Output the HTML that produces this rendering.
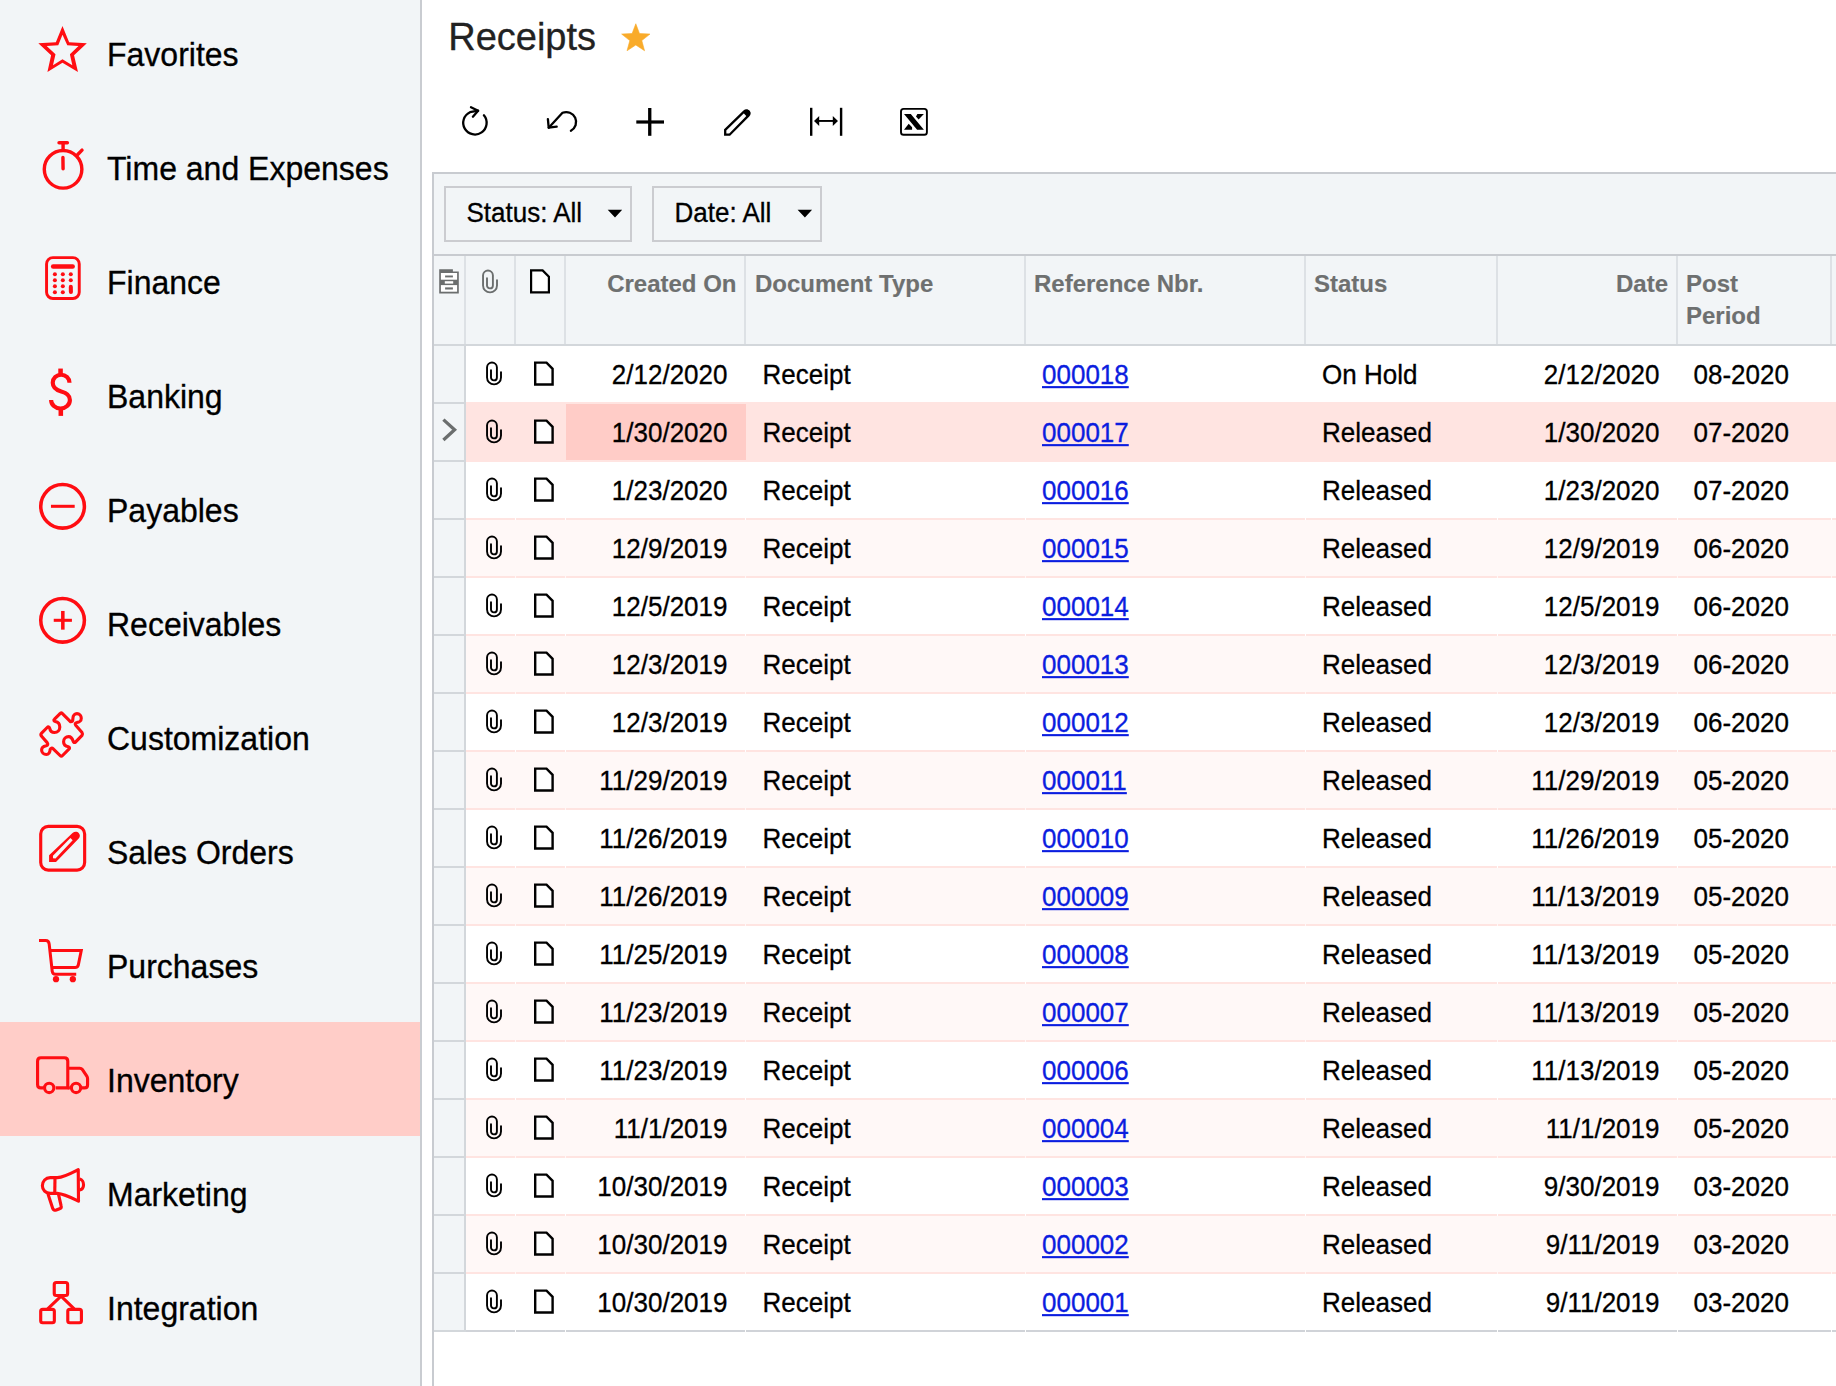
<!DOCTYPE html>
<html><head><meta charset="utf-8"><title>Receipts</title>
<style>
html,body{margin:0;padding:0;}
body{width:1836px;height:1386px;overflow:hidden;position:relative;background:#fff;font-family:"Liberation Sans",sans-serif;}
.t{position:absolute;white-space:nowrap;-webkit-text-stroke:0.3px currentColor;transform:scaleY(1.05);}
.r{position:absolute;}
svg{position:absolute;overflow:visible;}
a{color:#0b1ddf;text-decoration:underline;text-decoration-thickness:2px;text-underline-offset:2px;}
</style></head><body>

<div class="r" style="left:0px;top:0px;width:420px;height:1386px;background:#f2f5f7;"></div>
<div class="r" style="left:420px;top:0px;width:2px;height:1386px;background:#c9ccd1;"></div>
<div class="r" style="left:0px;top:1022px;width:420px;height:114px;background:#ffcdc8;"></div>
<div class="t" style="left:107px;top:39.21px;font-size:32px;line-height:32px;color:#000;font-weight:normal;transform-origin:0 27.09px;">Favorites</div>
<div class="t" style="left:107px;top:153.21px;font-size:32px;line-height:32px;color:#000;font-weight:normal;transform-origin:0 27.09px;">Time and Expenses</div>
<div class="t" style="left:107px;top:267.21px;font-size:32px;line-height:32px;color:#000;font-weight:normal;transform-origin:0 27.09px;">Finance</div>
<div class="t" style="left:107px;top:381.21px;font-size:32px;line-height:32px;color:#000;font-weight:normal;transform-origin:0 27.09px;">Banking</div>
<div class="t" style="left:107px;top:495.21px;font-size:32px;line-height:32px;color:#000;font-weight:normal;transform-origin:0 27.09px;">Payables</div>
<div class="t" style="left:107px;top:609.21px;font-size:32px;line-height:32px;color:#000;font-weight:normal;transform-origin:0 27.09px;">Receivables</div>
<div class="t" style="left:107px;top:723.21px;font-size:32px;line-height:32px;color:#000;font-weight:normal;transform-origin:0 27.09px;">Customization</div>
<div class="t" style="left:107px;top:837.21px;font-size:32px;line-height:32px;color:#000;font-weight:normal;transform-origin:0 27.09px;">Sales Orders</div>
<div class="t" style="left:107px;top:951.21px;font-size:32px;line-height:32px;color:#000;font-weight:normal;transform-origin:0 27.09px;">Purchases</div>
<div class="t" style="left:107px;top:1065.21px;font-size:32px;line-height:32px;color:#000;font-weight:normal;transform-origin:0 27.09px;">Inventory</div>
<div class="t" style="left:107px;top:1179.21px;font-size:32px;line-height:32px;color:#000;font-weight:normal;transform-origin:0 27.09px;">Marketing</div>
<div class="t" style="left:107px;top:1293.21px;font-size:32px;line-height:32px;color:#000;font-weight:normal;transform-origin:0 27.09px;">Integration</div>
<svg style="left:30px;top:20px" width="70" height="70" viewBox="0 0 1386 1386"><path fill="#ff0d12" fill-rule="evenodd" d="M643 120 L775 440 L1125 462 L872 700 L950 1030 L643 848 L345 1030 L418 700 L165 462 L512 440 Z M643 290 L560 498 L330 515 L505 680 L455 895 L643 775 L838 895 L790 680 L960 515 L738 498 Z"/></svg>
<svg style="left:30px;top:135px" width="70" height="70" viewBox="0 0 1386 1386"><g fill="none" stroke="#ff0d12" stroke-width="68" stroke-linecap="round"><circle cx="655" cy="680" r="372"/><line x1="575" y1="152" x2="740" y2="152"/><line x1="655" y1="152" x2="655" y2="300" stroke-linecap="butt"/><line x1="652" y1="445" x2="655" y2="670"/><line x1="945" y1="385" x2="1030" y2="300"/></g></svg>
<svg style="left:30px;top:248px" width="70" height="70" viewBox="0 0 1386 1386"><g><rect x="328" y="190" width="647" height="810" rx="125" fill="none" stroke="#ff0d12" stroke-width="58"/><line x1="458" y1="365" x2="845" y2="365" stroke="#ff0d12" stroke-width="88" stroke-linecap="round"/><circle cx="493" cy="520" r="40" fill="#ff0d12"/><circle cx="493" cy="638" r="40" fill="#ff0d12"/><circle cx="493" cy="757" r="40" fill="#ff0d12"/><circle cx="493" cy="875" r="40" fill="#ff0d12"/><circle cx="650" cy="520" r="40" fill="#ff0d12"/><circle cx="650" cy="638" r="40" fill="#ff0d12"/><circle cx="650" cy="757" r="40" fill="#ff0d12"/><circle cx="650" cy="875" r="40" fill="#ff0d12"/><circle cx="808" cy="520" r="40" fill="#ff0d12"/><circle cx="808" cy="638" r="40" fill="#ff0d12"/><line x1="808" y1="770" x2="810" y2="870" stroke="#ff0d12" stroke-width="80" stroke-linecap="round"/></g></svg>
<svg style="left:30px;top:362px" width="70" height="70" viewBox="0 0 1386 1386"><g><path fill="none" stroke="#ff0d12" stroke-width="82" d="M782 410 A166 158 0 0 0 450 410 C450 515 520 555 620 585 C730 615 790 670 790 750 A186 170 0 0 1 418 750"/><rect x="560" y="130" width="90" height="140" fill="#ff0d12"/><rect x="565" y="900" width="90" height="167" fill="#ff0d12"/></g></svg>
<svg style="left:30px;top:476px" width="70" height="70" viewBox="0 0 1386 1386"><g><circle cx="645" cy="600" r="432" fill="none" stroke="#ff0d12" stroke-width="70"/><rect x="415" y="570" width="470" height="60" fill="#ff0d12"/></g></svg>
<svg style="left:30px;top:590px" width="70" height="70" viewBox="0 0 1386 1386"><g><circle cx="645" cy="600" r="432" fill="none" stroke="#ff0d12" stroke-width="70"/><rect x="470" y="570" width="360" height="60" fill="#ff0d12"/><rect x="615" y="415" width="70" height="370" fill="#ff0d12"/></g></svg>
<svg style="left:30px;top:704px" width="70" height="70" viewBox="0 0 1386 1386"><path fill="none" stroke="#ff0d12" stroke-width="62" stroke-linejoin="round" stroke-linecap="round" d="M627 175 L805 352 C835 352 850 320 850 280 C850 220 890 190 930 190 C980 190 1015 235 1015 280 C1015 330 975 365 930 365 C890 370 890 400 905 420 L1030 565 C1040 580 1040 605 1030 620 L900 755 C880 770 860 760 855 740 C840 690 810 645 765 645 C710 645 665 690 665 745 C665 800 700 835 760 845 C780 850 790 870 775 890 L645 1020 C630 1035 610 1035 595 1020 L455 885 C435 865 410 875 400 900 C395 960 370 1000 325 1000 C270 1000 230 960 230 910 C230 860 270 835 320 825 C355 815 360 790 340 765 L230 640 C215 620 215 590 230 575 L340 465 C360 445 385 455 390 480 C400 540 440 565 485 565 C545 565 590 515 590 455 C590 400 555 355 500 345 C470 340 465 315 485 300 L595 190 C605 175 615 170 627 175 Z"/></svg>
<svg style="left:30px;top:818px" width="70" height="70" viewBox="0 0 1386 1386"><g><rect x="212" y="165" width="870" height="868" rx="150" fill="none" stroke="#ff0d12" stroke-width="62"/><path fill="#ff0d12" fill-rule="evenodd" d="M378 738 L842 298 C880 262 935 262 968 300 C1000 335 990 380 960 410 L515 870 L378 870 Z M455 745 L455 795 L505 800 L845 440 L800 398 Z"/></g></svg>
<svg style="left:30px;top:932px" width="70" height="70" viewBox="0 0 1386 1386"><g fill="none" stroke="#ff0d12" stroke-width="60"><path stroke-linejoin="round" d="M178 168 L310 168 C350 168 375 195 380 240 L440 780 C445 820 470 838 510 838 L915 838"/><path d="M405 368 L1015 368 L955 660 C945 690 925 705 895 705 L445 705"/><circle cx="515" cy="935" r="32" fill="#ff0d12" stroke="none"/><circle cx="515" cy="935" r="62" fill="#ff0d12" stroke="none"/><circle cx="848" cy="935" r="62" fill="#ff0d12" stroke="none"/></g></svg>
<svg style="left:30px;top:1046px" width="70" height="70" viewBox="0 0 1386 1386"><g fill="none" stroke="#ff0d12" stroke-width="62" stroke-linejoin="round"><path d="M265 830 L215 830 C175 830 150 800 150 760 L150 300 C150 260 175 232 215 232 L680 232 C720 232 748 260 748 300 L748 830 L510 830"/><path d="M748 440 L985 440 C1010 440 1025 450 1035 465 L1125 595 C1135 610 1140 625 1140 650 L1140 770 C1140 805 1115 830 1080 830 L1030 830"/><path d="M790 830 L748 830"/><circle cx="380" cy="830" r="92"/><circle cx="912" cy="830" r="92"/></g></svg>
<svg style="left:30px;top:1160px" width="70" height="70" viewBox="0 0 1386 1386"><g fill="none" stroke="#ff0d12" stroke-width="62" stroke-linejoin="round"><path d="M955 190 L960 815 C810 740 680 670 540 660 L400 660 C310 660 245 590 245 510 C245 420 310 350 400 350 L540 350 C680 340 800 270 955 190 Z"/><line x1="495" y1="350" x2="490" y2="660"/><path d="M985 375 C1030 385 1060 440 1060 490 C1060 545 1030 585 985 595"/><path d="M355 670 L450 960 C460 990 490 1000 520 990 L585 965 C615 955 625 935 615 905 L565 680"/></g></svg>
<svg style="left:30px;top:1274px" width="70" height="70" viewBox="0 0 1386 1386"><g fill="none" stroke="#ff0d12" stroke-width="62" stroke-linejoin="round"><rect x="480" y="168" width="265" height="258" rx="40"/><rect x="212" y="700" width="270" height="265" rx="40"/><rect x="748" y="700" width="270" height="265" rx="40"/><path d="M350 690 L615 440 L875 690" stroke-linejoin="miter"/></g></svg>
<div class="t" style="left:448.2px;top:17.83px;font-size:38px;line-height:38px;color:#222;font-weight:normal;transform-origin:0 32.17px;transform:none">Receipts</div>
<svg style="left:0;top:0" width="700" height="80"><path fill="#f9ab2a" stroke="#f9ab2a" stroke-width="0.6" stroke-linejoin="round" d="M635.80 23.77 L639.50 33.57 L649.97 34.07 L641.79 40.62 L644.56 50.72 L635.80 44.97 L627.04 50.72 L629.81 40.62 L621.63 34.07 L632.10 33.57 Z"/></svg>
<svg style="left:0;top:0" width="1836" height="200" viewBox="0 0 1836 200"><g fill="none" stroke="#000" stroke-width="2.3" stroke-linecap="round" stroke-linejoin="round"><path d="M483.9 115.3 A11.7 11.7 0 1 1 470 112.2 L478.1 110.7"/><path d="M471 107.2 L478.1 110.7 L472.9 116.7"/><path d="M570.9 130.7 A9.9 9.9 0 0 0 562.5 112.8 L548.7 127.7"/><path d="M547.9 119.2 L548.7 127.7 L556.7 126.7"/></g><rect x="636.3" y="120.4" width="27.7" height="3.2" fill="#000"/><rect x="648.1" y="108" width="3.3" height="27.8" fill="#000"/><path fill="none" stroke="#000" stroke-width="2.3" stroke-linejoin="miter" d="M725.2 129.8 L744.2 111.4 C745.6 110.2 747.3 110.3 748.5 111.5 C749.7 112.7 749.6 114.3 748.4 115.6 L729.6 134.7 L725.2 134.7 Z"/><path fill="#000" d="M743 112.5 L745.5 110.2 C747 109.2 748.7 109.6 749.6 110.8 C750.6 112 750.5 113.6 749.4 114.8 L747.2 117 Z"/><rect x="810" y="107.8" width="2.4" height="28" fill="#000"/><rect x="839.9" y="107.8" width="2.4" height="28" fill="#000"/><rect x="817" y="120" width="18" height="1.9" fill="#000"/><path fill="#000" d="M814 121 L819.2 116 L819.2 126 Z M838 121 L832.8 116 L832.8 126 Z"/><rect x="901" y="108.9" width="25.9" height="25.9" rx="2.6" fill="none" stroke="#000" stroke-width="1.9"/><path fill="#000" d="M904 114.1 L910.8 114.1 L923.9 129.7 L917.1 129.7 Z M917.4 114.1 L923.9 114.1 L918.6 119.5 L916 116.4 Z M904 129.7 L912.1 129.7 L912.1 127.3 L908.7 123.7 Z"/></svg>
<div class="r" style="left:432px;top:172px;width:1404px;height:2px;background:#c8cbd0;"></div>
<div class="r" style="left:432px;top:172px;width:2px;height:1214px;background:#c8cbd0;"></div>
<div class="r" style="left:434px;top:174px;width:1402px;height:80px;background:#f2f5f7;"></div>
<div class="r" style="left:434px;top:254px;width:1402px;height:2px;background:#c8cbd0;"></div>
<div class="r" style="left:444px;top:186px;width:184px;height:52px;border:2px solid #cbccd0;background:#f2f5f7"></div>
<div class="r" style="left:652px;top:186px;width:166px;height:52px;border:2px solid #cbccd0;background:#f2f5f7"></div>
<svg style="left:0;top:0" width="1836" height="260"><path fill="#000" d="M607.7 209.7 L622.2 209.7 L615 217.4 Z M797.6 209.7 L812.1 209.7 L804.9 217.4 Z"/></svg>
<div class="t" style="left:466.5px;top:199.99px;font-size:26px;line-height:26px;color:#000;font-weight:normal;transform-origin:0 22.01px;">Status: All</div>
<div class="t" style="left:674.5px;top:199.99px;font-size:26px;line-height:26px;color:#000;font-weight:normal;transform-origin:0 22.01px;">Date: All</div>
<div class="r" style="left:434px;top:256px;width:1402px;height:88px;background:#f2f5f7;"></div>
<div class="r" style="left:434px;top:344px;width:1402px;height:2px;background:#d3d7db;"></div>
<div class="r" style="left:464px;top:256px;width:2px;height:88px;background:#dde1e5;"></div>
<div class="r" style="left:514px;top:256px;width:2px;height:88px;background:#dde1e5;"></div>
<div class="r" style="left:564px;top:256px;width:2px;height:88px;background:#dde1e5;"></div>
<div class="r" style="left:744px;top:256px;width:2px;height:88px;background:#dde1e5;"></div>
<div class="r" style="left:1024px;top:256px;width:2px;height:88px;background:#dde1e5;"></div>
<div class="r" style="left:1304px;top:256px;width:2px;height:88px;background:#dde1e5;"></div>
<div class="r" style="left:1496px;top:256px;width:2px;height:88px;background:#dde1e5;"></div>
<div class="r" style="left:1676px;top:256px;width:2px;height:88px;background:#dde1e5;"></div>
<div class="r" style="left:1830px;top:256px;width:2px;height:88px;background:#dde1e5;"></div>
<div class="t" style="right:1099.5px;top:271.68px;font-size:24px;line-height:24px;color:#6e7070;font-weight:bold;transform-origin:0 20.32px;text-align:right;transform:none;-webkit-text-stroke:0.15px currentColor">Created On</div>
<div class="t" style="left:755px;top:271.68px;font-size:24px;line-height:24px;color:#6e7070;font-weight:bold;transform-origin:0 20.32px;transform:none;-webkit-text-stroke:0.15px currentColor">Document Type</div>
<div class="t" style="left:1034px;top:271.68px;font-size:24px;line-height:24px;color:#6e7070;font-weight:bold;transform-origin:0 20.32px;transform:none;-webkit-text-stroke:0.15px currentColor">Reference Nbr.</div>
<div class="t" style="left:1314px;top:271.68px;font-size:24px;line-height:24px;color:#6e7070;font-weight:bold;transform-origin:0 20.32px;transform:none;-webkit-text-stroke:0.15px currentColor">Status</div>
<div class="t" style="right:168px;top:271.68px;font-size:24px;line-height:24px;color:#6e7070;font-weight:bold;transform-origin:0 20.32px;text-align:right;transform:none;-webkit-text-stroke:0.15px currentColor">Date</div>
<div class="t" style="left:1686px;top:271.68px;font-size:24px;line-height:24px;color:#6e7070;font-weight:bold;transform-origin:0 20.32px;transform:none;-webkit-text-stroke:0.15px currentColor">Post</div>
<div class="t" style="left:1686px;top:303.68px;font-size:24px;line-height:24px;color:#6e7070;font-weight:bold;transform-origin:0 20.32px;transform:none;-webkit-text-stroke:0.15px currentColor">Period</div>
<svg style="left:0;top:0" width="1836" height="400"><path fill="#6b6e6e" d="M439.2 269.3 L452.9 269.3 L452.9 271.4 L458.8 271.4 L458.8 293.4 L439.2 293.4 Z"/><g fill="#fff"><rect x="440.9" y="273" width="16.2" height="6.7"/><rect x="440.9" y="285.1" width="16.2" height="6.6"/><rect x="444.8" y="281.2" width="8.4" height="2.4"/></g><g fill="#6b6e6e"><rect x="445.1" y="275.5" width="7.8" height="1.9"/><rect x="445.1" y="287.4" width="7.8" height="2.1"/></g><path fill="none" stroke="#6b6e6e" stroke-width="1.9" stroke-linecap="round" transform="translate(-4,-92)" d="M501 372.1 L501 377.4 A6.97 6.97 0 0 1 487.04 377.4 L487.04 367.2 A4.94 4.94 0 0 1 496.9 367.2 L496.9 377.4 A2.94 2.94 0 0 1 491 377.4 L491 370.2"/><path fill="#fff" stroke="#000" stroke-width="2.2" stroke-linejoin="miter" d="M531.1 270.4 L542.6 270.4 L548.9 276.8 L548.9 292.3 L531.1 292.3 Z"/></svg>
<div class="r" style="left:466px;top:346px;width:1370px;height:58px;background:#ffffff;"></div>
<div class="r" style="left:466px;top:402px;width:1370px;height:2px;background:#ffe4e1;"></div>
<div class="r" style="left:515px;top:402px;width:1px;height:2px;background:#ffe4e1;"></div>
<div class="r" style="left:565px;top:402px;width:1px;height:2px;background:#ffe4e1;"></div>
<div class="r" style="left:745px;top:402px;width:1px;height:2px;background:#ffe4e1;"></div>
<div class="r" style="left:1025px;top:402px;width:1px;height:2px;background:#ffe4e1;"></div>
<div class="r" style="left:1305px;top:402px;width:1px;height:2px;background:#ffe4e1;"></div>
<div class="r" style="left:1497px;top:402px;width:1px;height:2px;background:#ffe4e1;"></div>
<div class="r" style="left:1677px;top:402px;width:1px;height:2px;background:#ffe4e1;"></div>
<div class="r" style="left:1831px;top:402px;width:1px;height:2px;background:#ffe4e1;"></div>
<div class="r" style="left:434px;top:346px;width:30px;height:58px;background:#f2f5f7;"></div>
<div class="r" style="left:464px;top:346px;width:2px;height:58px;background:#d3d7db;"></div>
<div class="r" style="left:434px;top:402px;width:30px;height:2px;background:#d3d7db;"></div>
<div class="t" style="right:1108.5px;top:361.99px;font-size:26px;line-height:26px;color:#000;font-weight:normal;transform-origin:0 22.01px;text-align:right;">2/12/2020</div>
<div class="t" style="left:762.5px;top:361.99px;font-size:26px;line-height:26px;color:#000;font-weight:normal;transform-origin:0 22.01px;">Receipt</div>
<div class="t" style="left:1042px;top:361.99px;font-size:26px;line-height:26px;color:#000;font-weight:normal;transform-origin:0 22.01px;"><a>000018</a></div>
<div class="t" style="left:1322px;top:361.99px;font-size:26px;line-height:26px;color:#000;font-weight:normal;transform-origin:0 22.01px;">On Hold</div>
<div class="t" style="right:176.5px;top:361.99px;font-size:26px;line-height:26px;color:#000;font-weight:normal;transform-origin:0 22.01px;text-align:right;">2/12/2020</div>
<div class="t" style="left:1693.5px;top:361.99px;font-size:26px;line-height:26px;color:#000;font-weight:normal;transform-origin:0 22.01px;">08-2020</div>
<div class="r" style="left:466px;top:402px;width:1370px;height:60px;background:#ffe4e1;"></div>
<div class="r" style="left:466px;top:460px;width:1370px;height:2px;background:#ffe4e1;"></div>
<div class="r" style="left:434px;top:404px;width:30px;height:58px;background:#f2f5f7;"></div>
<div class="r" style="left:464px;top:404px;width:2px;height:58px;background:#d3d7db;"></div>
<div class="r" style="left:434px;top:460px;width:30px;height:2px;background:#d3d7db;"></div>
<div class="r" style="left:566px;top:404px;width:180px;height:56px;background:#ffccc7;"></div>
<div class="t" style="right:1108.5px;top:419.99px;font-size:26px;line-height:26px;color:#000;font-weight:normal;transform-origin:0 22.01px;text-align:right;">1/30/2020</div>
<div class="t" style="left:762.5px;top:419.99px;font-size:26px;line-height:26px;color:#000;font-weight:normal;transform-origin:0 22.01px;">Receipt</div>
<div class="t" style="left:1042px;top:419.99px;font-size:26px;line-height:26px;color:#000;font-weight:normal;transform-origin:0 22.01px;"><a>000017</a></div>
<div class="t" style="left:1322px;top:419.99px;font-size:26px;line-height:26px;color:#000;font-weight:normal;transform-origin:0 22.01px;">Released</div>
<div class="t" style="right:176.5px;top:419.99px;font-size:26px;line-height:26px;color:#000;font-weight:normal;transform-origin:0 22.01px;text-align:right;">1/30/2020</div>
<div class="t" style="left:1693.5px;top:419.99px;font-size:26px;line-height:26px;color:#000;font-weight:normal;transform-origin:0 22.01px;">07-2020</div>
<div class="r" style="left:466px;top:462px;width:1370px;height:58px;background:#ffffff;"></div>
<div class="r" style="left:466px;top:518px;width:1370px;height:2px;background:#ffe4e1;"></div>
<div class="r" style="left:515px;top:518px;width:1px;height:2px;background:#ffffff;"></div>
<div class="r" style="left:565px;top:518px;width:1px;height:2px;background:#ffffff;"></div>
<div class="r" style="left:745px;top:518px;width:1px;height:2px;background:#ffffff;"></div>
<div class="r" style="left:1025px;top:518px;width:1px;height:2px;background:#ffffff;"></div>
<div class="r" style="left:1305px;top:518px;width:1px;height:2px;background:#ffffff;"></div>
<div class="r" style="left:1497px;top:518px;width:1px;height:2px;background:#ffffff;"></div>
<div class="r" style="left:1677px;top:518px;width:1px;height:2px;background:#ffffff;"></div>
<div class="r" style="left:1831px;top:518px;width:1px;height:2px;background:#ffffff;"></div>
<div class="r" style="left:434px;top:462px;width:30px;height:58px;background:#f2f5f7;"></div>
<div class="r" style="left:464px;top:462px;width:2px;height:58px;background:#d3d7db;"></div>
<div class="r" style="left:434px;top:518px;width:30px;height:2px;background:#d3d7db;"></div>
<div class="t" style="right:1108.5px;top:477.99px;font-size:26px;line-height:26px;color:#000;font-weight:normal;transform-origin:0 22.01px;text-align:right;">1/23/2020</div>
<div class="t" style="left:762.5px;top:477.99px;font-size:26px;line-height:26px;color:#000;font-weight:normal;transform-origin:0 22.01px;">Receipt</div>
<div class="t" style="left:1042px;top:477.99px;font-size:26px;line-height:26px;color:#000;font-weight:normal;transform-origin:0 22.01px;"><a>000016</a></div>
<div class="t" style="left:1322px;top:477.99px;font-size:26px;line-height:26px;color:#000;font-weight:normal;transform-origin:0 22.01px;">Released</div>
<div class="t" style="right:176.5px;top:477.99px;font-size:26px;line-height:26px;color:#000;font-weight:normal;transform-origin:0 22.01px;text-align:right;">1/23/2020</div>
<div class="t" style="left:1693.5px;top:477.99px;font-size:26px;line-height:26px;color:#000;font-weight:normal;transform-origin:0 22.01px;">07-2020</div>
<div class="r" style="left:466px;top:520px;width:1370px;height:58px;background:#fff8f7;"></div>
<div class="r" style="left:466px;top:576px;width:1370px;height:2px;background:#ffe4e1;"></div>
<div class="r" style="left:515px;top:576px;width:1px;height:2px;background:#fff8f7;"></div>
<div class="r" style="left:565px;top:576px;width:1px;height:2px;background:#fff8f7;"></div>
<div class="r" style="left:745px;top:576px;width:1px;height:2px;background:#fff8f7;"></div>
<div class="r" style="left:1025px;top:576px;width:1px;height:2px;background:#fff8f7;"></div>
<div class="r" style="left:1305px;top:576px;width:1px;height:2px;background:#fff8f7;"></div>
<div class="r" style="left:1497px;top:576px;width:1px;height:2px;background:#fff8f7;"></div>
<div class="r" style="left:1677px;top:576px;width:1px;height:2px;background:#fff8f7;"></div>
<div class="r" style="left:1831px;top:576px;width:1px;height:2px;background:#fff8f7;"></div>
<div class="r" style="left:434px;top:520px;width:30px;height:58px;background:#f2f5f7;"></div>
<div class="r" style="left:464px;top:520px;width:2px;height:58px;background:#d3d7db;"></div>
<div class="r" style="left:434px;top:576px;width:30px;height:2px;background:#d3d7db;"></div>
<div class="t" style="right:1108.5px;top:535.99px;font-size:26px;line-height:26px;color:#000;font-weight:normal;transform-origin:0 22.01px;text-align:right;">12/9/2019</div>
<div class="t" style="left:762.5px;top:535.99px;font-size:26px;line-height:26px;color:#000;font-weight:normal;transform-origin:0 22.01px;">Receipt</div>
<div class="t" style="left:1042px;top:535.99px;font-size:26px;line-height:26px;color:#000;font-weight:normal;transform-origin:0 22.01px;"><a>000015</a></div>
<div class="t" style="left:1322px;top:535.99px;font-size:26px;line-height:26px;color:#000;font-weight:normal;transform-origin:0 22.01px;">Released</div>
<div class="t" style="right:176.5px;top:535.99px;font-size:26px;line-height:26px;color:#000;font-weight:normal;transform-origin:0 22.01px;text-align:right;">12/9/2019</div>
<div class="t" style="left:1693.5px;top:535.99px;font-size:26px;line-height:26px;color:#000;font-weight:normal;transform-origin:0 22.01px;">06-2020</div>
<div class="r" style="left:466px;top:578px;width:1370px;height:58px;background:#ffffff;"></div>
<div class="r" style="left:466px;top:634px;width:1370px;height:2px;background:#ffe4e1;"></div>
<div class="r" style="left:515px;top:634px;width:1px;height:2px;background:#ffffff;"></div>
<div class="r" style="left:565px;top:634px;width:1px;height:2px;background:#ffffff;"></div>
<div class="r" style="left:745px;top:634px;width:1px;height:2px;background:#ffffff;"></div>
<div class="r" style="left:1025px;top:634px;width:1px;height:2px;background:#ffffff;"></div>
<div class="r" style="left:1305px;top:634px;width:1px;height:2px;background:#ffffff;"></div>
<div class="r" style="left:1497px;top:634px;width:1px;height:2px;background:#ffffff;"></div>
<div class="r" style="left:1677px;top:634px;width:1px;height:2px;background:#ffffff;"></div>
<div class="r" style="left:1831px;top:634px;width:1px;height:2px;background:#ffffff;"></div>
<div class="r" style="left:434px;top:578px;width:30px;height:58px;background:#f2f5f7;"></div>
<div class="r" style="left:464px;top:578px;width:2px;height:58px;background:#d3d7db;"></div>
<div class="r" style="left:434px;top:634px;width:30px;height:2px;background:#d3d7db;"></div>
<div class="t" style="right:1108.5px;top:593.99px;font-size:26px;line-height:26px;color:#000;font-weight:normal;transform-origin:0 22.01px;text-align:right;">12/5/2019</div>
<div class="t" style="left:762.5px;top:593.99px;font-size:26px;line-height:26px;color:#000;font-weight:normal;transform-origin:0 22.01px;">Receipt</div>
<div class="t" style="left:1042px;top:593.99px;font-size:26px;line-height:26px;color:#000;font-weight:normal;transform-origin:0 22.01px;"><a>000014</a></div>
<div class="t" style="left:1322px;top:593.99px;font-size:26px;line-height:26px;color:#000;font-weight:normal;transform-origin:0 22.01px;">Released</div>
<div class="t" style="right:176.5px;top:593.99px;font-size:26px;line-height:26px;color:#000;font-weight:normal;transform-origin:0 22.01px;text-align:right;">12/5/2019</div>
<div class="t" style="left:1693.5px;top:593.99px;font-size:26px;line-height:26px;color:#000;font-weight:normal;transform-origin:0 22.01px;">06-2020</div>
<div class="r" style="left:466px;top:636px;width:1370px;height:58px;background:#fff8f7;"></div>
<div class="r" style="left:466px;top:692px;width:1370px;height:2px;background:#ffe4e1;"></div>
<div class="r" style="left:515px;top:692px;width:1px;height:2px;background:#fff8f7;"></div>
<div class="r" style="left:565px;top:692px;width:1px;height:2px;background:#fff8f7;"></div>
<div class="r" style="left:745px;top:692px;width:1px;height:2px;background:#fff8f7;"></div>
<div class="r" style="left:1025px;top:692px;width:1px;height:2px;background:#fff8f7;"></div>
<div class="r" style="left:1305px;top:692px;width:1px;height:2px;background:#fff8f7;"></div>
<div class="r" style="left:1497px;top:692px;width:1px;height:2px;background:#fff8f7;"></div>
<div class="r" style="left:1677px;top:692px;width:1px;height:2px;background:#fff8f7;"></div>
<div class="r" style="left:1831px;top:692px;width:1px;height:2px;background:#fff8f7;"></div>
<div class="r" style="left:434px;top:636px;width:30px;height:58px;background:#f2f5f7;"></div>
<div class="r" style="left:464px;top:636px;width:2px;height:58px;background:#d3d7db;"></div>
<div class="r" style="left:434px;top:692px;width:30px;height:2px;background:#d3d7db;"></div>
<div class="t" style="right:1108.5px;top:651.99px;font-size:26px;line-height:26px;color:#000;font-weight:normal;transform-origin:0 22.01px;text-align:right;">12/3/2019</div>
<div class="t" style="left:762.5px;top:651.99px;font-size:26px;line-height:26px;color:#000;font-weight:normal;transform-origin:0 22.01px;">Receipt</div>
<div class="t" style="left:1042px;top:651.99px;font-size:26px;line-height:26px;color:#000;font-weight:normal;transform-origin:0 22.01px;"><a>000013</a></div>
<div class="t" style="left:1322px;top:651.99px;font-size:26px;line-height:26px;color:#000;font-weight:normal;transform-origin:0 22.01px;">Released</div>
<div class="t" style="right:176.5px;top:651.99px;font-size:26px;line-height:26px;color:#000;font-weight:normal;transform-origin:0 22.01px;text-align:right;">12/3/2019</div>
<div class="t" style="left:1693.5px;top:651.99px;font-size:26px;line-height:26px;color:#000;font-weight:normal;transform-origin:0 22.01px;">06-2020</div>
<div class="r" style="left:466px;top:694px;width:1370px;height:58px;background:#ffffff;"></div>
<div class="r" style="left:466px;top:750px;width:1370px;height:2px;background:#ffe4e1;"></div>
<div class="r" style="left:515px;top:750px;width:1px;height:2px;background:#ffffff;"></div>
<div class="r" style="left:565px;top:750px;width:1px;height:2px;background:#ffffff;"></div>
<div class="r" style="left:745px;top:750px;width:1px;height:2px;background:#ffffff;"></div>
<div class="r" style="left:1025px;top:750px;width:1px;height:2px;background:#ffffff;"></div>
<div class="r" style="left:1305px;top:750px;width:1px;height:2px;background:#ffffff;"></div>
<div class="r" style="left:1497px;top:750px;width:1px;height:2px;background:#ffffff;"></div>
<div class="r" style="left:1677px;top:750px;width:1px;height:2px;background:#ffffff;"></div>
<div class="r" style="left:1831px;top:750px;width:1px;height:2px;background:#ffffff;"></div>
<div class="r" style="left:434px;top:694px;width:30px;height:58px;background:#f2f5f7;"></div>
<div class="r" style="left:464px;top:694px;width:2px;height:58px;background:#d3d7db;"></div>
<div class="r" style="left:434px;top:750px;width:30px;height:2px;background:#d3d7db;"></div>
<div class="t" style="right:1108.5px;top:709.99px;font-size:26px;line-height:26px;color:#000;font-weight:normal;transform-origin:0 22.01px;text-align:right;">12/3/2019</div>
<div class="t" style="left:762.5px;top:709.99px;font-size:26px;line-height:26px;color:#000;font-weight:normal;transform-origin:0 22.01px;">Receipt</div>
<div class="t" style="left:1042px;top:709.99px;font-size:26px;line-height:26px;color:#000;font-weight:normal;transform-origin:0 22.01px;"><a>000012</a></div>
<div class="t" style="left:1322px;top:709.99px;font-size:26px;line-height:26px;color:#000;font-weight:normal;transform-origin:0 22.01px;">Released</div>
<div class="t" style="right:176.5px;top:709.99px;font-size:26px;line-height:26px;color:#000;font-weight:normal;transform-origin:0 22.01px;text-align:right;">12/3/2019</div>
<div class="t" style="left:1693.5px;top:709.99px;font-size:26px;line-height:26px;color:#000;font-weight:normal;transform-origin:0 22.01px;">06-2020</div>
<div class="r" style="left:466px;top:752px;width:1370px;height:58px;background:#fff8f7;"></div>
<div class="r" style="left:466px;top:808px;width:1370px;height:2px;background:#ffe4e1;"></div>
<div class="r" style="left:515px;top:808px;width:1px;height:2px;background:#fff8f7;"></div>
<div class="r" style="left:565px;top:808px;width:1px;height:2px;background:#fff8f7;"></div>
<div class="r" style="left:745px;top:808px;width:1px;height:2px;background:#fff8f7;"></div>
<div class="r" style="left:1025px;top:808px;width:1px;height:2px;background:#fff8f7;"></div>
<div class="r" style="left:1305px;top:808px;width:1px;height:2px;background:#fff8f7;"></div>
<div class="r" style="left:1497px;top:808px;width:1px;height:2px;background:#fff8f7;"></div>
<div class="r" style="left:1677px;top:808px;width:1px;height:2px;background:#fff8f7;"></div>
<div class="r" style="left:1831px;top:808px;width:1px;height:2px;background:#fff8f7;"></div>
<div class="r" style="left:434px;top:752px;width:30px;height:58px;background:#f2f5f7;"></div>
<div class="r" style="left:464px;top:752px;width:2px;height:58px;background:#d3d7db;"></div>
<div class="r" style="left:434px;top:808px;width:30px;height:2px;background:#d3d7db;"></div>
<div class="t" style="right:1108.5px;top:767.99px;font-size:26px;line-height:26px;color:#000;font-weight:normal;transform-origin:0 22.01px;text-align:right;">11/29/2019</div>
<div class="t" style="left:762.5px;top:767.99px;font-size:26px;line-height:26px;color:#000;font-weight:normal;transform-origin:0 22.01px;">Receipt</div>
<div class="t" style="left:1042px;top:767.99px;font-size:26px;line-height:26px;color:#000;font-weight:normal;transform-origin:0 22.01px;"><a>000011</a></div>
<div class="t" style="left:1322px;top:767.99px;font-size:26px;line-height:26px;color:#000;font-weight:normal;transform-origin:0 22.01px;">Released</div>
<div class="t" style="right:176.5px;top:767.99px;font-size:26px;line-height:26px;color:#000;font-weight:normal;transform-origin:0 22.01px;text-align:right;">11/29/2019</div>
<div class="t" style="left:1693.5px;top:767.99px;font-size:26px;line-height:26px;color:#000;font-weight:normal;transform-origin:0 22.01px;">05-2020</div>
<div class="r" style="left:466px;top:810px;width:1370px;height:58px;background:#ffffff;"></div>
<div class="r" style="left:466px;top:866px;width:1370px;height:2px;background:#ffe4e1;"></div>
<div class="r" style="left:515px;top:866px;width:1px;height:2px;background:#ffffff;"></div>
<div class="r" style="left:565px;top:866px;width:1px;height:2px;background:#ffffff;"></div>
<div class="r" style="left:745px;top:866px;width:1px;height:2px;background:#ffffff;"></div>
<div class="r" style="left:1025px;top:866px;width:1px;height:2px;background:#ffffff;"></div>
<div class="r" style="left:1305px;top:866px;width:1px;height:2px;background:#ffffff;"></div>
<div class="r" style="left:1497px;top:866px;width:1px;height:2px;background:#ffffff;"></div>
<div class="r" style="left:1677px;top:866px;width:1px;height:2px;background:#ffffff;"></div>
<div class="r" style="left:1831px;top:866px;width:1px;height:2px;background:#ffffff;"></div>
<div class="r" style="left:434px;top:810px;width:30px;height:58px;background:#f2f5f7;"></div>
<div class="r" style="left:464px;top:810px;width:2px;height:58px;background:#d3d7db;"></div>
<div class="r" style="left:434px;top:866px;width:30px;height:2px;background:#d3d7db;"></div>
<div class="t" style="right:1108.5px;top:825.99px;font-size:26px;line-height:26px;color:#000;font-weight:normal;transform-origin:0 22.01px;text-align:right;">11/26/2019</div>
<div class="t" style="left:762.5px;top:825.99px;font-size:26px;line-height:26px;color:#000;font-weight:normal;transform-origin:0 22.01px;">Receipt</div>
<div class="t" style="left:1042px;top:825.99px;font-size:26px;line-height:26px;color:#000;font-weight:normal;transform-origin:0 22.01px;"><a>000010</a></div>
<div class="t" style="left:1322px;top:825.99px;font-size:26px;line-height:26px;color:#000;font-weight:normal;transform-origin:0 22.01px;">Released</div>
<div class="t" style="right:176.5px;top:825.99px;font-size:26px;line-height:26px;color:#000;font-weight:normal;transform-origin:0 22.01px;text-align:right;">11/26/2019</div>
<div class="t" style="left:1693.5px;top:825.99px;font-size:26px;line-height:26px;color:#000;font-weight:normal;transform-origin:0 22.01px;">05-2020</div>
<div class="r" style="left:466px;top:868px;width:1370px;height:58px;background:#fff8f7;"></div>
<div class="r" style="left:466px;top:924px;width:1370px;height:2px;background:#ffe4e1;"></div>
<div class="r" style="left:515px;top:924px;width:1px;height:2px;background:#fff8f7;"></div>
<div class="r" style="left:565px;top:924px;width:1px;height:2px;background:#fff8f7;"></div>
<div class="r" style="left:745px;top:924px;width:1px;height:2px;background:#fff8f7;"></div>
<div class="r" style="left:1025px;top:924px;width:1px;height:2px;background:#fff8f7;"></div>
<div class="r" style="left:1305px;top:924px;width:1px;height:2px;background:#fff8f7;"></div>
<div class="r" style="left:1497px;top:924px;width:1px;height:2px;background:#fff8f7;"></div>
<div class="r" style="left:1677px;top:924px;width:1px;height:2px;background:#fff8f7;"></div>
<div class="r" style="left:1831px;top:924px;width:1px;height:2px;background:#fff8f7;"></div>
<div class="r" style="left:434px;top:868px;width:30px;height:58px;background:#f2f5f7;"></div>
<div class="r" style="left:464px;top:868px;width:2px;height:58px;background:#d3d7db;"></div>
<div class="r" style="left:434px;top:924px;width:30px;height:2px;background:#d3d7db;"></div>
<div class="t" style="right:1108.5px;top:883.99px;font-size:26px;line-height:26px;color:#000;font-weight:normal;transform-origin:0 22.01px;text-align:right;">11/26/2019</div>
<div class="t" style="left:762.5px;top:883.99px;font-size:26px;line-height:26px;color:#000;font-weight:normal;transform-origin:0 22.01px;">Receipt</div>
<div class="t" style="left:1042px;top:883.99px;font-size:26px;line-height:26px;color:#000;font-weight:normal;transform-origin:0 22.01px;"><a>000009</a></div>
<div class="t" style="left:1322px;top:883.99px;font-size:26px;line-height:26px;color:#000;font-weight:normal;transform-origin:0 22.01px;">Released</div>
<div class="t" style="right:176.5px;top:883.99px;font-size:26px;line-height:26px;color:#000;font-weight:normal;transform-origin:0 22.01px;text-align:right;">11/13/2019</div>
<div class="t" style="left:1693.5px;top:883.99px;font-size:26px;line-height:26px;color:#000;font-weight:normal;transform-origin:0 22.01px;">05-2020</div>
<div class="r" style="left:466px;top:926px;width:1370px;height:58px;background:#ffffff;"></div>
<div class="r" style="left:466px;top:982px;width:1370px;height:2px;background:#ffe4e1;"></div>
<div class="r" style="left:515px;top:982px;width:1px;height:2px;background:#ffffff;"></div>
<div class="r" style="left:565px;top:982px;width:1px;height:2px;background:#ffffff;"></div>
<div class="r" style="left:745px;top:982px;width:1px;height:2px;background:#ffffff;"></div>
<div class="r" style="left:1025px;top:982px;width:1px;height:2px;background:#ffffff;"></div>
<div class="r" style="left:1305px;top:982px;width:1px;height:2px;background:#ffffff;"></div>
<div class="r" style="left:1497px;top:982px;width:1px;height:2px;background:#ffffff;"></div>
<div class="r" style="left:1677px;top:982px;width:1px;height:2px;background:#ffffff;"></div>
<div class="r" style="left:1831px;top:982px;width:1px;height:2px;background:#ffffff;"></div>
<div class="r" style="left:434px;top:926px;width:30px;height:58px;background:#f2f5f7;"></div>
<div class="r" style="left:464px;top:926px;width:2px;height:58px;background:#d3d7db;"></div>
<div class="r" style="left:434px;top:982px;width:30px;height:2px;background:#d3d7db;"></div>
<div class="t" style="right:1108.5px;top:941.99px;font-size:26px;line-height:26px;color:#000;font-weight:normal;transform-origin:0 22.01px;text-align:right;">11/25/2019</div>
<div class="t" style="left:762.5px;top:941.99px;font-size:26px;line-height:26px;color:#000;font-weight:normal;transform-origin:0 22.01px;">Receipt</div>
<div class="t" style="left:1042px;top:941.99px;font-size:26px;line-height:26px;color:#000;font-weight:normal;transform-origin:0 22.01px;"><a>000008</a></div>
<div class="t" style="left:1322px;top:941.99px;font-size:26px;line-height:26px;color:#000;font-weight:normal;transform-origin:0 22.01px;">Released</div>
<div class="t" style="right:176.5px;top:941.99px;font-size:26px;line-height:26px;color:#000;font-weight:normal;transform-origin:0 22.01px;text-align:right;">11/13/2019</div>
<div class="t" style="left:1693.5px;top:941.99px;font-size:26px;line-height:26px;color:#000;font-weight:normal;transform-origin:0 22.01px;">05-2020</div>
<div class="r" style="left:466px;top:984px;width:1370px;height:58px;background:#fff8f7;"></div>
<div class="r" style="left:466px;top:1040px;width:1370px;height:2px;background:#ffe4e1;"></div>
<div class="r" style="left:515px;top:1040px;width:1px;height:2px;background:#fff8f7;"></div>
<div class="r" style="left:565px;top:1040px;width:1px;height:2px;background:#fff8f7;"></div>
<div class="r" style="left:745px;top:1040px;width:1px;height:2px;background:#fff8f7;"></div>
<div class="r" style="left:1025px;top:1040px;width:1px;height:2px;background:#fff8f7;"></div>
<div class="r" style="left:1305px;top:1040px;width:1px;height:2px;background:#fff8f7;"></div>
<div class="r" style="left:1497px;top:1040px;width:1px;height:2px;background:#fff8f7;"></div>
<div class="r" style="left:1677px;top:1040px;width:1px;height:2px;background:#fff8f7;"></div>
<div class="r" style="left:1831px;top:1040px;width:1px;height:2px;background:#fff8f7;"></div>
<div class="r" style="left:434px;top:984px;width:30px;height:58px;background:#f2f5f7;"></div>
<div class="r" style="left:464px;top:984px;width:2px;height:58px;background:#d3d7db;"></div>
<div class="r" style="left:434px;top:1040px;width:30px;height:2px;background:#d3d7db;"></div>
<div class="t" style="right:1108.5px;top:999.99px;font-size:26px;line-height:26px;color:#000;font-weight:normal;transform-origin:0 22.01px;text-align:right;">11/23/2019</div>
<div class="t" style="left:762.5px;top:999.99px;font-size:26px;line-height:26px;color:#000;font-weight:normal;transform-origin:0 22.01px;">Receipt</div>
<div class="t" style="left:1042px;top:999.99px;font-size:26px;line-height:26px;color:#000;font-weight:normal;transform-origin:0 22.01px;"><a>000007</a></div>
<div class="t" style="left:1322px;top:999.99px;font-size:26px;line-height:26px;color:#000;font-weight:normal;transform-origin:0 22.01px;">Released</div>
<div class="t" style="right:176.5px;top:999.99px;font-size:26px;line-height:26px;color:#000;font-weight:normal;transform-origin:0 22.01px;text-align:right;">11/13/2019</div>
<div class="t" style="left:1693.5px;top:999.99px;font-size:26px;line-height:26px;color:#000;font-weight:normal;transform-origin:0 22.01px;">05-2020</div>
<div class="r" style="left:466px;top:1042px;width:1370px;height:58px;background:#ffffff;"></div>
<div class="r" style="left:466px;top:1098px;width:1370px;height:2px;background:#ffe4e1;"></div>
<div class="r" style="left:515px;top:1098px;width:1px;height:2px;background:#ffffff;"></div>
<div class="r" style="left:565px;top:1098px;width:1px;height:2px;background:#ffffff;"></div>
<div class="r" style="left:745px;top:1098px;width:1px;height:2px;background:#ffffff;"></div>
<div class="r" style="left:1025px;top:1098px;width:1px;height:2px;background:#ffffff;"></div>
<div class="r" style="left:1305px;top:1098px;width:1px;height:2px;background:#ffffff;"></div>
<div class="r" style="left:1497px;top:1098px;width:1px;height:2px;background:#ffffff;"></div>
<div class="r" style="left:1677px;top:1098px;width:1px;height:2px;background:#ffffff;"></div>
<div class="r" style="left:1831px;top:1098px;width:1px;height:2px;background:#ffffff;"></div>
<div class="r" style="left:434px;top:1042px;width:30px;height:58px;background:#f2f5f7;"></div>
<div class="r" style="left:464px;top:1042px;width:2px;height:58px;background:#d3d7db;"></div>
<div class="r" style="left:434px;top:1098px;width:30px;height:2px;background:#d3d7db;"></div>
<div class="t" style="right:1108.5px;top:1057.99px;font-size:26px;line-height:26px;color:#000;font-weight:normal;transform-origin:0 22.01px;text-align:right;">11/23/2019</div>
<div class="t" style="left:762.5px;top:1057.99px;font-size:26px;line-height:26px;color:#000;font-weight:normal;transform-origin:0 22.01px;">Receipt</div>
<div class="t" style="left:1042px;top:1057.99px;font-size:26px;line-height:26px;color:#000;font-weight:normal;transform-origin:0 22.01px;"><a>000006</a></div>
<div class="t" style="left:1322px;top:1057.99px;font-size:26px;line-height:26px;color:#000;font-weight:normal;transform-origin:0 22.01px;">Released</div>
<div class="t" style="right:176.5px;top:1057.99px;font-size:26px;line-height:26px;color:#000;font-weight:normal;transform-origin:0 22.01px;text-align:right;">11/13/2019</div>
<div class="t" style="left:1693.5px;top:1057.99px;font-size:26px;line-height:26px;color:#000;font-weight:normal;transform-origin:0 22.01px;">05-2020</div>
<div class="r" style="left:466px;top:1100px;width:1370px;height:58px;background:#fff8f7;"></div>
<div class="r" style="left:466px;top:1156px;width:1370px;height:2px;background:#ffe4e1;"></div>
<div class="r" style="left:515px;top:1156px;width:1px;height:2px;background:#fff8f7;"></div>
<div class="r" style="left:565px;top:1156px;width:1px;height:2px;background:#fff8f7;"></div>
<div class="r" style="left:745px;top:1156px;width:1px;height:2px;background:#fff8f7;"></div>
<div class="r" style="left:1025px;top:1156px;width:1px;height:2px;background:#fff8f7;"></div>
<div class="r" style="left:1305px;top:1156px;width:1px;height:2px;background:#fff8f7;"></div>
<div class="r" style="left:1497px;top:1156px;width:1px;height:2px;background:#fff8f7;"></div>
<div class="r" style="left:1677px;top:1156px;width:1px;height:2px;background:#fff8f7;"></div>
<div class="r" style="left:1831px;top:1156px;width:1px;height:2px;background:#fff8f7;"></div>
<div class="r" style="left:434px;top:1100px;width:30px;height:58px;background:#f2f5f7;"></div>
<div class="r" style="left:464px;top:1100px;width:2px;height:58px;background:#d3d7db;"></div>
<div class="r" style="left:434px;top:1156px;width:30px;height:2px;background:#d3d7db;"></div>
<div class="t" style="right:1108.5px;top:1115.99px;font-size:26px;line-height:26px;color:#000;font-weight:normal;transform-origin:0 22.01px;text-align:right;">11/1/2019</div>
<div class="t" style="left:762.5px;top:1115.99px;font-size:26px;line-height:26px;color:#000;font-weight:normal;transform-origin:0 22.01px;">Receipt</div>
<div class="t" style="left:1042px;top:1115.99px;font-size:26px;line-height:26px;color:#000;font-weight:normal;transform-origin:0 22.01px;"><a>000004</a></div>
<div class="t" style="left:1322px;top:1115.99px;font-size:26px;line-height:26px;color:#000;font-weight:normal;transform-origin:0 22.01px;">Released</div>
<div class="t" style="right:176.5px;top:1115.99px;font-size:26px;line-height:26px;color:#000;font-weight:normal;transform-origin:0 22.01px;text-align:right;">11/1/2019</div>
<div class="t" style="left:1693.5px;top:1115.99px;font-size:26px;line-height:26px;color:#000;font-weight:normal;transform-origin:0 22.01px;">05-2020</div>
<div class="r" style="left:466px;top:1158px;width:1370px;height:58px;background:#ffffff;"></div>
<div class="r" style="left:466px;top:1214px;width:1370px;height:2px;background:#ffe4e1;"></div>
<div class="r" style="left:515px;top:1214px;width:1px;height:2px;background:#ffffff;"></div>
<div class="r" style="left:565px;top:1214px;width:1px;height:2px;background:#ffffff;"></div>
<div class="r" style="left:745px;top:1214px;width:1px;height:2px;background:#ffffff;"></div>
<div class="r" style="left:1025px;top:1214px;width:1px;height:2px;background:#ffffff;"></div>
<div class="r" style="left:1305px;top:1214px;width:1px;height:2px;background:#ffffff;"></div>
<div class="r" style="left:1497px;top:1214px;width:1px;height:2px;background:#ffffff;"></div>
<div class="r" style="left:1677px;top:1214px;width:1px;height:2px;background:#ffffff;"></div>
<div class="r" style="left:1831px;top:1214px;width:1px;height:2px;background:#ffffff;"></div>
<div class="r" style="left:434px;top:1158px;width:30px;height:58px;background:#f2f5f7;"></div>
<div class="r" style="left:464px;top:1158px;width:2px;height:58px;background:#d3d7db;"></div>
<div class="r" style="left:434px;top:1214px;width:30px;height:2px;background:#d3d7db;"></div>
<div class="t" style="right:1108.5px;top:1173.99px;font-size:26px;line-height:26px;color:#000;font-weight:normal;transform-origin:0 22.01px;text-align:right;">10/30/2019</div>
<div class="t" style="left:762.5px;top:1173.99px;font-size:26px;line-height:26px;color:#000;font-weight:normal;transform-origin:0 22.01px;">Receipt</div>
<div class="t" style="left:1042px;top:1173.99px;font-size:26px;line-height:26px;color:#000;font-weight:normal;transform-origin:0 22.01px;"><a>000003</a></div>
<div class="t" style="left:1322px;top:1173.99px;font-size:26px;line-height:26px;color:#000;font-weight:normal;transform-origin:0 22.01px;">Released</div>
<div class="t" style="right:176.5px;top:1173.99px;font-size:26px;line-height:26px;color:#000;font-weight:normal;transform-origin:0 22.01px;text-align:right;">9/30/2019</div>
<div class="t" style="left:1693.5px;top:1173.99px;font-size:26px;line-height:26px;color:#000;font-weight:normal;transform-origin:0 22.01px;">03-2020</div>
<div class="r" style="left:466px;top:1216px;width:1370px;height:58px;background:#fff8f7;"></div>
<div class="r" style="left:466px;top:1272px;width:1370px;height:2px;background:#ffe4e1;"></div>
<div class="r" style="left:515px;top:1272px;width:1px;height:2px;background:#fff8f7;"></div>
<div class="r" style="left:565px;top:1272px;width:1px;height:2px;background:#fff8f7;"></div>
<div class="r" style="left:745px;top:1272px;width:1px;height:2px;background:#fff8f7;"></div>
<div class="r" style="left:1025px;top:1272px;width:1px;height:2px;background:#fff8f7;"></div>
<div class="r" style="left:1305px;top:1272px;width:1px;height:2px;background:#fff8f7;"></div>
<div class="r" style="left:1497px;top:1272px;width:1px;height:2px;background:#fff8f7;"></div>
<div class="r" style="left:1677px;top:1272px;width:1px;height:2px;background:#fff8f7;"></div>
<div class="r" style="left:1831px;top:1272px;width:1px;height:2px;background:#fff8f7;"></div>
<div class="r" style="left:434px;top:1216px;width:30px;height:58px;background:#f2f5f7;"></div>
<div class="r" style="left:464px;top:1216px;width:2px;height:58px;background:#d3d7db;"></div>
<div class="r" style="left:434px;top:1272px;width:30px;height:2px;background:#d3d7db;"></div>
<div class="t" style="right:1108.5px;top:1231.99px;font-size:26px;line-height:26px;color:#000;font-weight:normal;transform-origin:0 22.01px;text-align:right;">10/30/2019</div>
<div class="t" style="left:762.5px;top:1231.99px;font-size:26px;line-height:26px;color:#000;font-weight:normal;transform-origin:0 22.01px;">Receipt</div>
<div class="t" style="left:1042px;top:1231.99px;font-size:26px;line-height:26px;color:#000;font-weight:normal;transform-origin:0 22.01px;"><a>000002</a></div>
<div class="t" style="left:1322px;top:1231.99px;font-size:26px;line-height:26px;color:#000;font-weight:normal;transform-origin:0 22.01px;">Released</div>
<div class="t" style="right:176.5px;top:1231.99px;font-size:26px;line-height:26px;color:#000;font-weight:normal;transform-origin:0 22.01px;text-align:right;">9/11/2019</div>
<div class="t" style="left:1693.5px;top:1231.99px;font-size:26px;line-height:26px;color:#000;font-weight:normal;transform-origin:0 22.01px;">03-2020</div>
<div class="r" style="left:466px;top:1274px;width:1370px;height:58px;background:#ffffff;"></div>
<div class="r" style="left:434px;top:1330px;width:1402px;height:2px;background:#d0d3d8;"></div>
<div class="r" style="left:515px;top:1330px;width:1px;height:2px;background:#ffffff;"></div>
<div class="r" style="left:565px;top:1330px;width:1px;height:2px;background:#ffffff;"></div>
<div class="r" style="left:745px;top:1330px;width:1px;height:2px;background:#ffffff;"></div>
<div class="r" style="left:1025px;top:1330px;width:1px;height:2px;background:#ffffff;"></div>
<div class="r" style="left:1305px;top:1330px;width:1px;height:2px;background:#ffffff;"></div>
<div class="r" style="left:1497px;top:1330px;width:1px;height:2px;background:#ffffff;"></div>
<div class="r" style="left:1677px;top:1330px;width:1px;height:2px;background:#ffffff;"></div>
<div class="r" style="left:1831px;top:1330px;width:1px;height:2px;background:#ffffff;"></div>
<div class="r" style="left:434px;top:1274px;width:30px;height:58px;background:#f2f5f7;"></div>
<div class="r" style="left:464px;top:1274px;width:2px;height:58px;background:#d3d7db;"></div>
<div class="r" style="left:434px;top:1330px;width:30px;height:2px;background:#d3d7db;"></div>
<div class="t" style="right:1108.5px;top:1289.99px;font-size:26px;line-height:26px;color:#000;font-weight:normal;transform-origin:0 22.01px;text-align:right;">10/30/2019</div>
<div class="t" style="left:762.5px;top:1289.99px;font-size:26px;line-height:26px;color:#000;font-weight:normal;transform-origin:0 22.01px;">Receipt</div>
<div class="t" style="left:1042px;top:1289.99px;font-size:26px;line-height:26px;color:#000;font-weight:normal;transform-origin:0 22.01px;"><a>000001</a></div>
<div class="t" style="left:1322px;top:1289.99px;font-size:26px;line-height:26px;color:#000;font-weight:normal;transform-origin:0 22.01px;">Released</div>
<div class="t" style="right:176.5px;top:1289.99px;font-size:26px;line-height:26px;color:#000;font-weight:normal;transform-origin:0 22.01px;text-align:right;">9/11/2019</div>
<div class="t" style="left:1693.5px;top:1289.99px;font-size:26px;line-height:26px;color:#000;font-weight:normal;transform-origin:0 22.01px;">03-2020</div>
<svg style="left:0;top:0" width="1836" height="1386"><g transform="translate(0,0)"><path fill="none" stroke="#000" stroke-width="1.9" stroke-linecap="round" d="M501 372.1 L501 377.4 A6.97 6.97 0 0 1 487.04 377.4 L487.04 367.2 A4.94 4.94 0 0 1 496.9 367.2 L496.9 377.4 A2.94 2.94 0 0 1 491 377.4 L491 370.2"/><path fill="#fff" stroke="#000" stroke-width="2.4" stroke-linejoin="miter" d="M535.2 362.6 L546.5 362.6 L552.6 368.8 L552.6 384.5 L535.2 384.5 Z"/></g><g transform="translate(0,58)"><path fill="none" stroke="#000" stroke-width="1.9" stroke-linecap="round" d="M501 372.1 L501 377.4 A6.97 6.97 0 0 1 487.04 377.4 L487.04 367.2 A4.94 4.94 0 0 1 496.9 367.2 L496.9 377.4 A2.94 2.94 0 0 1 491 377.4 L491 370.2"/><path fill="#fff" stroke="#000" stroke-width="2.4" stroke-linejoin="miter" d="M535.2 362.6 L546.5 362.6 L552.6 368.8 L552.6 384.5 L535.2 384.5 Z"/></g><g transform="translate(0,116)"><path fill="none" stroke="#000" stroke-width="1.9" stroke-linecap="round" d="M501 372.1 L501 377.4 A6.97 6.97 0 0 1 487.04 377.4 L487.04 367.2 A4.94 4.94 0 0 1 496.9 367.2 L496.9 377.4 A2.94 2.94 0 0 1 491 377.4 L491 370.2"/><path fill="#fff" stroke="#000" stroke-width="2.4" stroke-linejoin="miter" d="M535.2 362.6 L546.5 362.6 L552.6 368.8 L552.6 384.5 L535.2 384.5 Z"/></g><g transform="translate(0,174)"><path fill="none" stroke="#000" stroke-width="1.9" stroke-linecap="round" d="M501 372.1 L501 377.4 A6.97 6.97 0 0 1 487.04 377.4 L487.04 367.2 A4.94 4.94 0 0 1 496.9 367.2 L496.9 377.4 A2.94 2.94 0 0 1 491 377.4 L491 370.2"/><path fill="#fff" stroke="#000" stroke-width="2.4" stroke-linejoin="miter" d="M535.2 362.6 L546.5 362.6 L552.6 368.8 L552.6 384.5 L535.2 384.5 Z"/></g><g transform="translate(0,232)"><path fill="none" stroke="#000" stroke-width="1.9" stroke-linecap="round" d="M501 372.1 L501 377.4 A6.97 6.97 0 0 1 487.04 377.4 L487.04 367.2 A4.94 4.94 0 0 1 496.9 367.2 L496.9 377.4 A2.94 2.94 0 0 1 491 377.4 L491 370.2"/><path fill="#fff" stroke="#000" stroke-width="2.4" stroke-linejoin="miter" d="M535.2 362.6 L546.5 362.6 L552.6 368.8 L552.6 384.5 L535.2 384.5 Z"/></g><g transform="translate(0,290)"><path fill="none" stroke="#000" stroke-width="1.9" stroke-linecap="round" d="M501 372.1 L501 377.4 A6.97 6.97 0 0 1 487.04 377.4 L487.04 367.2 A4.94 4.94 0 0 1 496.9 367.2 L496.9 377.4 A2.94 2.94 0 0 1 491 377.4 L491 370.2"/><path fill="#fff" stroke="#000" stroke-width="2.4" stroke-linejoin="miter" d="M535.2 362.6 L546.5 362.6 L552.6 368.8 L552.6 384.5 L535.2 384.5 Z"/></g><g transform="translate(0,348)"><path fill="none" stroke="#000" stroke-width="1.9" stroke-linecap="round" d="M501 372.1 L501 377.4 A6.97 6.97 0 0 1 487.04 377.4 L487.04 367.2 A4.94 4.94 0 0 1 496.9 367.2 L496.9 377.4 A2.94 2.94 0 0 1 491 377.4 L491 370.2"/><path fill="#fff" stroke="#000" stroke-width="2.4" stroke-linejoin="miter" d="M535.2 362.6 L546.5 362.6 L552.6 368.8 L552.6 384.5 L535.2 384.5 Z"/></g><g transform="translate(0,406)"><path fill="none" stroke="#000" stroke-width="1.9" stroke-linecap="round" d="M501 372.1 L501 377.4 A6.97 6.97 0 0 1 487.04 377.4 L487.04 367.2 A4.94 4.94 0 0 1 496.9 367.2 L496.9 377.4 A2.94 2.94 0 0 1 491 377.4 L491 370.2"/><path fill="#fff" stroke="#000" stroke-width="2.4" stroke-linejoin="miter" d="M535.2 362.6 L546.5 362.6 L552.6 368.8 L552.6 384.5 L535.2 384.5 Z"/></g><g transform="translate(0,464)"><path fill="none" stroke="#000" stroke-width="1.9" stroke-linecap="round" d="M501 372.1 L501 377.4 A6.97 6.97 0 0 1 487.04 377.4 L487.04 367.2 A4.94 4.94 0 0 1 496.9 367.2 L496.9 377.4 A2.94 2.94 0 0 1 491 377.4 L491 370.2"/><path fill="#fff" stroke="#000" stroke-width="2.4" stroke-linejoin="miter" d="M535.2 362.6 L546.5 362.6 L552.6 368.8 L552.6 384.5 L535.2 384.5 Z"/></g><g transform="translate(0,522)"><path fill="none" stroke="#000" stroke-width="1.9" stroke-linecap="round" d="M501 372.1 L501 377.4 A6.97 6.97 0 0 1 487.04 377.4 L487.04 367.2 A4.94 4.94 0 0 1 496.9 367.2 L496.9 377.4 A2.94 2.94 0 0 1 491 377.4 L491 370.2"/><path fill="#fff" stroke="#000" stroke-width="2.4" stroke-linejoin="miter" d="M535.2 362.6 L546.5 362.6 L552.6 368.8 L552.6 384.5 L535.2 384.5 Z"/></g><g transform="translate(0,580)"><path fill="none" stroke="#000" stroke-width="1.9" stroke-linecap="round" d="M501 372.1 L501 377.4 A6.97 6.97 0 0 1 487.04 377.4 L487.04 367.2 A4.94 4.94 0 0 1 496.9 367.2 L496.9 377.4 A2.94 2.94 0 0 1 491 377.4 L491 370.2"/><path fill="#fff" stroke="#000" stroke-width="2.4" stroke-linejoin="miter" d="M535.2 362.6 L546.5 362.6 L552.6 368.8 L552.6 384.5 L535.2 384.5 Z"/></g><g transform="translate(0,638)"><path fill="none" stroke="#000" stroke-width="1.9" stroke-linecap="round" d="M501 372.1 L501 377.4 A6.97 6.97 0 0 1 487.04 377.4 L487.04 367.2 A4.94 4.94 0 0 1 496.9 367.2 L496.9 377.4 A2.94 2.94 0 0 1 491 377.4 L491 370.2"/><path fill="#fff" stroke="#000" stroke-width="2.4" stroke-linejoin="miter" d="M535.2 362.6 L546.5 362.6 L552.6 368.8 L552.6 384.5 L535.2 384.5 Z"/></g><g transform="translate(0,696)"><path fill="none" stroke="#000" stroke-width="1.9" stroke-linecap="round" d="M501 372.1 L501 377.4 A6.97 6.97 0 0 1 487.04 377.4 L487.04 367.2 A4.94 4.94 0 0 1 496.9 367.2 L496.9 377.4 A2.94 2.94 0 0 1 491 377.4 L491 370.2"/><path fill="#fff" stroke="#000" stroke-width="2.4" stroke-linejoin="miter" d="M535.2 362.6 L546.5 362.6 L552.6 368.8 L552.6 384.5 L535.2 384.5 Z"/></g><g transform="translate(0,754)"><path fill="none" stroke="#000" stroke-width="1.9" stroke-linecap="round" d="M501 372.1 L501 377.4 A6.97 6.97 0 0 1 487.04 377.4 L487.04 367.2 A4.94 4.94 0 0 1 496.9 367.2 L496.9 377.4 A2.94 2.94 0 0 1 491 377.4 L491 370.2"/><path fill="#fff" stroke="#000" stroke-width="2.4" stroke-linejoin="miter" d="M535.2 362.6 L546.5 362.6 L552.6 368.8 L552.6 384.5 L535.2 384.5 Z"/></g><g transform="translate(0,812)"><path fill="none" stroke="#000" stroke-width="1.9" stroke-linecap="round" d="M501 372.1 L501 377.4 A6.97 6.97 0 0 1 487.04 377.4 L487.04 367.2 A4.94 4.94 0 0 1 496.9 367.2 L496.9 377.4 A2.94 2.94 0 0 1 491 377.4 L491 370.2"/><path fill="#fff" stroke="#000" stroke-width="2.4" stroke-linejoin="miter" d="M535.2 362.6 L546.5 362.6 L552.6 368.8 L552.6 384.5 L535.2 384.5 Z"/></g><g transform="translate(0,870)"><path fill="none" stroke="#000" stroke-width="1.9" stroke-linecap="round" d="M501 372.1 L501 377.4 A6.97 6.97 0 0 1 487.04 377.4 L487.04 367.2 A4.94 4.94 0 0 1 496.9 367.2 L496.9 377.4 A2.94 2.94 0 0 1 491 377.4 L491 370.2"/><path fill="#fff" stroke="#000" stroke-width="2.4" stroke-linejoin="miter" d="M535.2 362.6 L546.5 362.6 L552.6 368.8 L552.6 384.5 L535.2 384.5 Z"/></g><g transform="translate(0,928)"><path fill="none" stroke="#000" stroke-width="1.9" stroke-linecap="round" d="M501 372.1 L501 377.4 A6.97 6.97 0 0 1 487.04 377.4 L487.04 367.2 A4.94 4.94 0 0 1 496.9 367.2 L496.9 377.4 A2.94 2.94 0 0 1 491 377.4 L491 370.2"/><path fill="#fff" stroke="#000" stroke-width="2.4" stroke-linejoin="miter" d="M535.2 362.6 L546.5 362.6 L552.6 368.8 L552.6 384.5 L535.2 384.5 Z"/></g><path fill="none" stroke="#6b6e6e" stroke-width="3.3" stroke-linejoin="miter" d="M443.4 419.6 L454.6 429.8 L443.4 440"/></svg>
</body></html>
